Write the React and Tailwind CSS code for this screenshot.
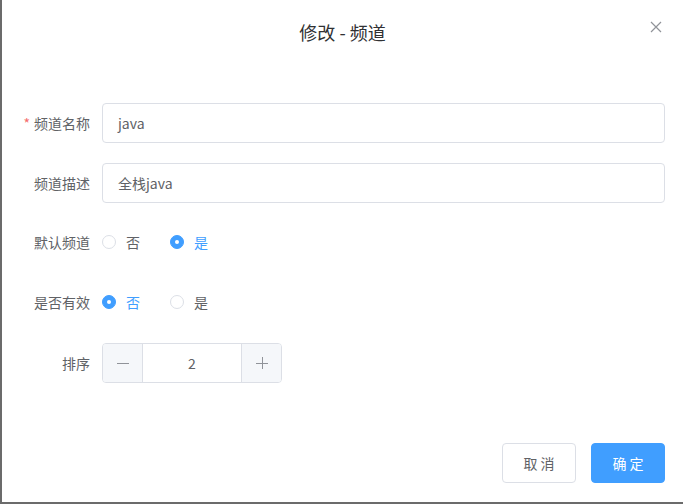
import React from "react";

const font = { fontFamily: '"Noto Sans CJK SC", "Noto Sans", sans-serif' };

function Radio({ checked, label }) {
  return (
    <label className="flex items-center mr-[30px] cursor-pointer">
      {checked ? (
        <span className="w-[14px] h-[14px] rounded-full bg-[#409eff] border border-[#409eff] flex items-center justify-center">
          <span className="w-[4px] h-[4px] rounded-full bg-white" />
        </span>
      ) : (
        <span className="w-[14px] h-[14px] rounded-full bg-white border border-[#dcdfe6]" />
      )}
      <span className={`pl-[10px] text-[14px] leading-[14px] ${checked ? "text-[#409eff]" : "text-[#606266]"}`}>{label}</span>
    </label>
  );
}

function Row({ label, required, children, shift }) {
  return (
    <div className="flex items-center h-[40px] mb-[20px]">
      <div className={`w-[100px] pr-[12px] text-right text-[14px] text-[#606266] ${shift ? "-mt-[2px]" : ""}`}>
        {required && <span className="text-[#f56c6c] mr-[4px]">*</span>}
        {label}
      </div>
      <div className={`flex-1 flex items-center ${shift ? "-mt-[2px]" : ""}`}>{children}</div>
    </div>
  );
}

export default function App() {
  return (
    <div className="w-[683px] h-[504px] bg-[#6b6b6b] overflow-hidden" style={font}>
      <div className="ml-[2px] h-[502px] bg-white relative">
        <div className="pt-[20px] pb-[10px] px-[20px] flex justify-center">
          <span className="text-[18px] leading-[24px] text-[#303133]">修改 - 频道</span>
        </div>
        <button className="absolute right-[21px] top-[21px] w-[12px] h-[12px] text-[#909399]">
          <svg viewBox="0 0 12 12" width="12" height="12" fill="none" stroke="currentColor" strokeWidth="1.2">
            <path d="M1 1 L11 11 M11 1 L1 11" />
          </svg>
        </button>
        <div className="pt-[49px] pr-[18px]">
          <Row label="频道名称" required>
            <div className="w-full h-[40px] border border-[#dcdfe6] rounded-[4px] px-[15px] flex items-center text-[14px] text-[#606266]">java</div>
          </Row>
          <Row label="频道描述">
            <div className="w-full h-[40px] border border-[#dcdfe6] rounded-[4px] px-[15px] flex items-center text-[14px] text-[#606266]">全栈java</div>
          </Row>
          <Row label="默认频道" shift>
            <Radio label="否" />
            <Radio checked label="是" />
          </Row>
          <Row label="是否有效" shift>
            <Radio checked label="否" />
            <Radio label="是" />
          </Row>
          <Row label="排序">
            <div className="w-[180px] h-[40px] border border-[#dcdfe6] rounded-[4px] flex overflow-hidden">
              <div className="w-[40px] h-full bg-[#f5f7fa] border-r border-[#dcdfe6] flex items-center justify-center text-[#909399]">
                <svg width="12" height="12" viewBox="0 0 12 12" stroke="currentColor" strokeWidth="1"><path d="M0 6.5 H12" /></svg>
              </div>
              <div className="flex-1 flex items-center justify-center text-[14px] text-[#606266]">2</div>
              <div className="w-[40px] h-full bg-[#f5f7fa] border-l border-[#dcdfe6] flex items-center justify-center text-[#909399]">
                <svg width="12" height="12" viewBox="0 0 12 12" stroke="currentColor" strokeWidth="1"><path d="M0 6.5 H12 M6.5 0 V12" /></svg>
              </div>
            </div>
          </Row>
        </div>
        <div className="flex justify-end pr-[18px] pt-[40px] gap-[15px]">
          <button className="h-[40px] w-[74px] border border-[#dcdfe6] rounded-[4px] bg-white text-[14px] text-[#606266]">取 消</button>
          <button className="h-[40px] w-[74px] border border-[#409eff] rounded-[4px] bg-[#409eff] text-[14px] text-white">确 定</button>
        </div>
      </div>
    </div>
  );
}
